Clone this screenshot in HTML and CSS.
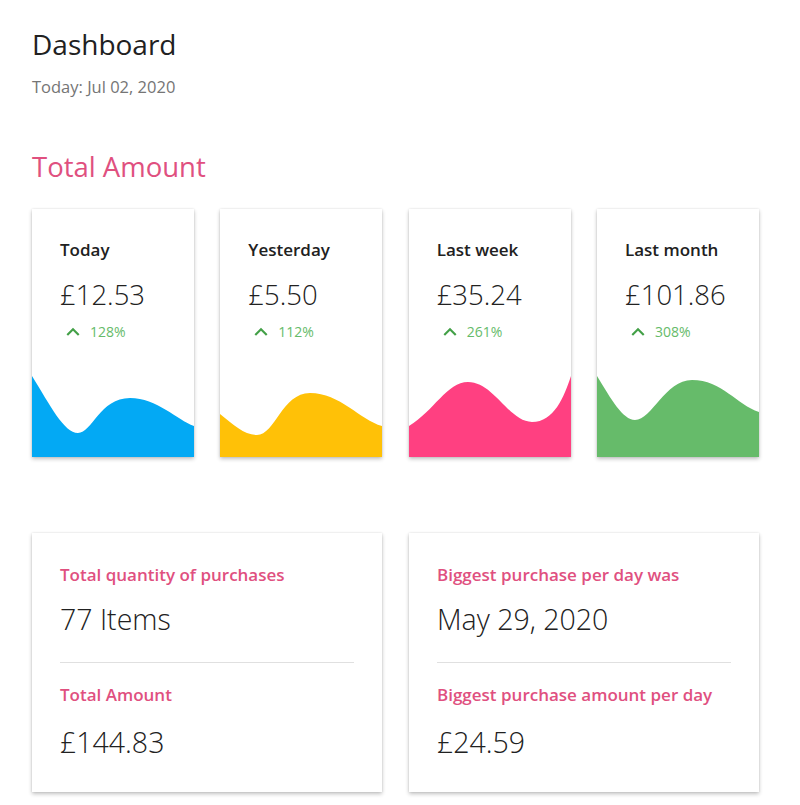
FILE: index.html
```html
<!DOCTYPE html>
<html>
<head>
<meta charset="utf-8">
<link rel="stylesheet" href="styles.css">
</head>
<body>
<div class="page">
  <h1 class="title">Dashboard</h1>
  <div class="subtitle">Today: Jul 02, 2020</div>
  <h2 class="section">Total Amount</h2>

  <div class="stats">
    <div class="card stat">
      <div class="stat-body">
        <div class="stat-label">Today</div>
        <div class="stat-value">£12.53</div>
        <div class="trend">
          <svg class="chev" viewBox="0 0 24 24"><path d="M7.41 15.41 12 10.83l4.59 4.58L18 14l-6-6-6 6z"/></svg>
          <span>128%</span>
        </div>
      </div>
      <svg class="wave" viewBox="0 0 162 82" preserveAspectRatio="none"><path class="blue" d="M0,1 C18,30 32,58 46,58 C60,58 68,23 98,23 C125,23 145,45 162,51 L162,82 L0,82 Z"/></svg>
    </div>
    <div class="card stat">
      <div class="stat-body">
        <div class="stat-label">Yesterday</div>
        <div class="stat-value">£5.50</div>
        <div class="trend">
          <svg class="chev" viewBox="0 0 24 24"><path d="M7.41 15.41 12 10.83l4.59 4.58L18 14l-6-6-6 6z"/></svg>
          <span>112%</span>
        </div>
      </div>
      <svg class="wave" viewBox="0 0 162 82" preserveAspectRatio="none"><path class="yellow" d="M0,39 C14,50 24,60 37,60 C55,60 62,18 90,18 C120,18 140,45 162,51 L162,82 L0,82 Z"/></svg>
    </div>
    <div class="card stat">
      <div class="stat-body">
        <div class="stat-label">Last week</div>
        <div class="stat-value">£35.24</div>
        <div class="trend">
          <svg class="chev" viewBox="0 0 24 24"><path d="M7.41 15.41 12 10.83l4.59 4.58L18 14l-6-6-6 6z"/></svg>
          <span>261%</span>
        </div>
      </div>
      <svg class="wave" viewBox="0 0 162 82" preserveAspectRatio="none"><path class="pink" d="M0,51 C25,36 38,7 59,7 C85,7 100,47 123,47 C145,47 155,22 162,1 L162,82 L0,82 Z"/></svg>
    </div>
    <div class="card stat">
      <div class="stat-body">
        <div class="stat-label">Last month</div>
        <div class="stat-value">£101.86</div>
        <div class="trend">
          <svg class="chev" viewBox="0 0 24 24"><path d="M7.41 15.41 12 10.83l4.59 4.58L18 14l-6-6-6 6z"/></svg>
          <span>308%</span>
        </div>
      </div>
      <svg class="wave" viewBox="0 0 162 82" preserveAspectRatio="none"><path class="green" d="M0,1 C14,24 26,45 38,45 C55,45 68,5 95,5 C125,5 140,30 162,37 L162,82 L0,82 Z"/></svg>
    </div>
  </div>

  <div class="summary">
    <div class="card info">
      <div class="info-label">Total quantity of purchases</div>
      <div class="info-value">77 Items</div>
      <hr class="divider">
      <div class="info-label">Total Amount</div>
      <div class="info-value">£144.83</div>
    </div>
    <div class="card info">
      <div class="info-label">Biggest purchase per day was</div>
      <div class="info-value">May 29, 2020</div>
      <hr class="divider">
      <div class="info-label">Biggest purchase amount per day</div>
      <div class="info-value">£24.59</div>
    </div>
  </div>
</div>
</body>
</html>
```

FILE: styles.css
```css
* { box-sizing: border-box; }
html, body { margin: 0; padding: 0; background: #ffffff; }
body {
  font-family: "Open Sans", "Noto Sans", sans-serif;
  color: #212121;
}
.page {
  width: 727px;
  margin-left: 32px;
  padding-top: 24px;
  padding-bottom: 13px;
}
.title {
  margin: 0;
  font-size: 28px;
  font-weight: 400;
  line-height: 40px;
  color: #212121;
}
.subtitle {
  margin-top: 12px;
  font-size: 16.5px;
  line-height: 22px;
  color: #757575;
}
.section {
  margin: 49px 0 0;
  font-size: 27.5px;
  font-weight: 400;
  line-height: 40px;
  color: #e0507f;
}
.stats {
  margin-top: 22px;
  display: grid;
  grid-template-columns: repeat(4, 1fr);
  column-gap: 26.33px;
}
.card {
  background: #fff;
  box-shadow: 0 2px 4px rgba(0,0,0,.24), 0 0 2px rgba(0,0,0,.10);
}
.stat {
  height: 248px;
  display: flex;
  flex-direction: column;
  justify-content: space-between;
  overflow: hidden;
}
.stat-body {
  padding: 30px 0 0 28px;
}
.stat-label {
  font-size: 17px;
  font-weight: 600;
  line-height: 22px;
  color: #212121;
}
.stat-value {
  margin-top: 16px;
  font-size: 27.5px;
  font-weight: 300;
  line-height: 36px;
  color: #212121;
}
.trend {
  margin-top: 9px;
  display: flex;
  align-items: center;
  gap: 4px;
  font-size: 14px;
  line-height: 20px;
  color: #66bb6a;
}
.chev {
  width: 26px;
  height: 26px;
  margin: -3px 0;
  fill: #43a047;
}
.wave {
  display: block;
  width: 162px;
  height: 82px;
}
.blue { fill: #03a9f4; }
.yellow { fill: #ffc107; }
.pink { fill: #ff4081; }
.green { fill: #66bb6a; }

.summary {
  margin-top: 76px;
  display: grid;
  grid-template-columns: 1fr 1fr;
  column-gap: 27px;
}
.info {
  height: 259px;
  padding: 30px 28px 0;
}
.info-label {
  font-size: 17px;
  font-weight: 600;
  line-height: 24px;
  color: #e0507f;
}
.info-value {
  margin-top: 12px;
  font-size: 28.5px;
  font-weight: 300;
  line-height: 40px;
  color: #212121;
}
.divider {
  margin: 23px 0 20px;
  border: 0;
  border-top: 1px solid #e0e0e0;
}
.divider + .info-label + .info-value {
  margin-top: 15px;
}
```
